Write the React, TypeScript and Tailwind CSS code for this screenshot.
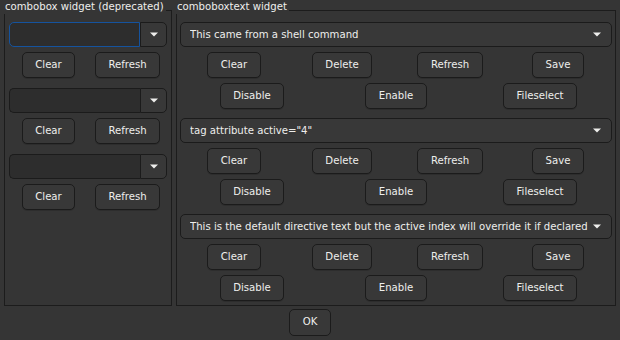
import React from 'react';

const font = { fontFamily: '"DejaVu Sans", sans-serif' };

function Arrow() {
  return (
    <svg width="8" height="5" viewBox="0 0 8 5" className="shrink-0">
      <polygon points="0,0.5 8,0.5 4,4.5" fill="#eeeeec" />
    </svg>
  );
}

function Btn({ label }: { label: string }) {
  return (
    <button className="h-[26px] px-[12.5px] rounded-[5px] border border-[#1b1b1b] bg-[#383838] text-[10.15px] text-[#eeeeec] leading-none shadow-[0_1px_0_rgba(0,0,0,0.15)]">
      {label}
    </button>
  );
}

function EntryCombo({ focused }: { focused?: boolean }) {
  return (
    <div className="flex h-[25px]">
      <div
        className={
          focused
            ? 'flex-1 rounded-l-[5px] border border-[#15539e] bg-[#2d2d2d]'
            : 'flex-1 rounded-l-[5px] border border-[#1b1b1b] border-r-0 bg-[#2d2d2d]'
        }
      />
      <div className="w-[27px] flex items-center justify-center rounded-r-[5px] border border-[#1b1b1b] bg-[#383838]">
        <Arrow />
      </div>
    </div>
  );
}

function TextCombo({ text }: { text: string }) {
  return (
    <div className="flex items-center h-[25px] pl-[9px] pr-[10px] rounded-[5px] border border-[#1b1b1b] bg-[#383838] text-[10.15px] text-[#eeeeec]">
      <span className="flex-1 whitespace-nowrap overflow-hidden">{text}</span>
      <Arrow />
    </div>
  );
}

function Frame({ title, className, children }: { title: string; className: string; children: React.ReactNode }) {
  return (
    <div className={'flex flex-col ' + className}>
      <div className="flex items-end h-[14px]">
        <span className="text-[10.15px] leading-[14px] text-[#eeeeec] pl-[1px] pr-[2px] whitespace-nowrap">{title}</span>
        <div className="flex-1 h-[4px] border-t border-r border-[#1c1c1c]" />
      </div>
      <div className="flex-1 border-l border-r border-b border-[#1c1c1c]">{children}</div>
    </div>
  );
}

function LeftGroup({ focused }: { focused?: boolean }) {
  return (
    <div className="flex flex-col gap-[5px] mb-[10px]">
      <EntryCombo focused={focused} />
      <div className="grid grid-cols-2 justify-items-center">
        <Btn label="Clear" />
        <Btn label="Refresh" />
      </div>
    </div>
  );
}

function RightGroup({ text, last }: { text: string; last?: boolean }) {
  return (
    <div className={last ? 'flex flex-col gap-[5px]' : 'flex flex-col gap-[5px] mb-[9px]'}>
      <TextCombo text={text} />
      <div className="grid grid-cols-4 justify-items-center">
        <Btn label="Clear" />
        <Btn label="Delete" />
        <Btn label="Refresh" />
        <Btn label="Save" />
      </div>
      <div className="grid grid-cols-3 justify-items-center">
        <Btn label="Disable" />
        <Btn label="Enable" />
        <Btn label="Fileselect" />
      </div>
    </div>
  );
}

export default function App() {
  return (
    <div style={font} className="w-[620px] h-[340px] bg-[#353535] flex flex-col px-[4px] pb-[4px] overflow-hidden">
      <div className="flex gap-[4px] h-[306px]">
        <Frame title="combobox widget (deprecated)" className="w-[168px]">
          <div className="px-[4px] pt-[8px]">
            <LeftGroup focused />
            <LeftGroup />
            <LeftGroup />
          </div>
        </Frame>
        <Frame title="comboboxtext widget" className="flex-1">
          <div className="px-[3px] pt-[8px]">
            <RightGroup text="This came from a shell command" />
            <RightGroup text={'tag attribute active="4"'} />
            <RightGroup text="This is the default directive text but the active index will override it if declared" last />
          </div>
        </Frame>
      </div>
      <div className="flex justify-center pt-[3px]">
        <button className="h-[27px] w-[42px] rounded-[5px] border border-[#1b1b1b] bg-[#383838] text-[10.15px] text-[#eeeeec] leading-none">
          OK
        </button>
      </div>
    </div>
  );
}
